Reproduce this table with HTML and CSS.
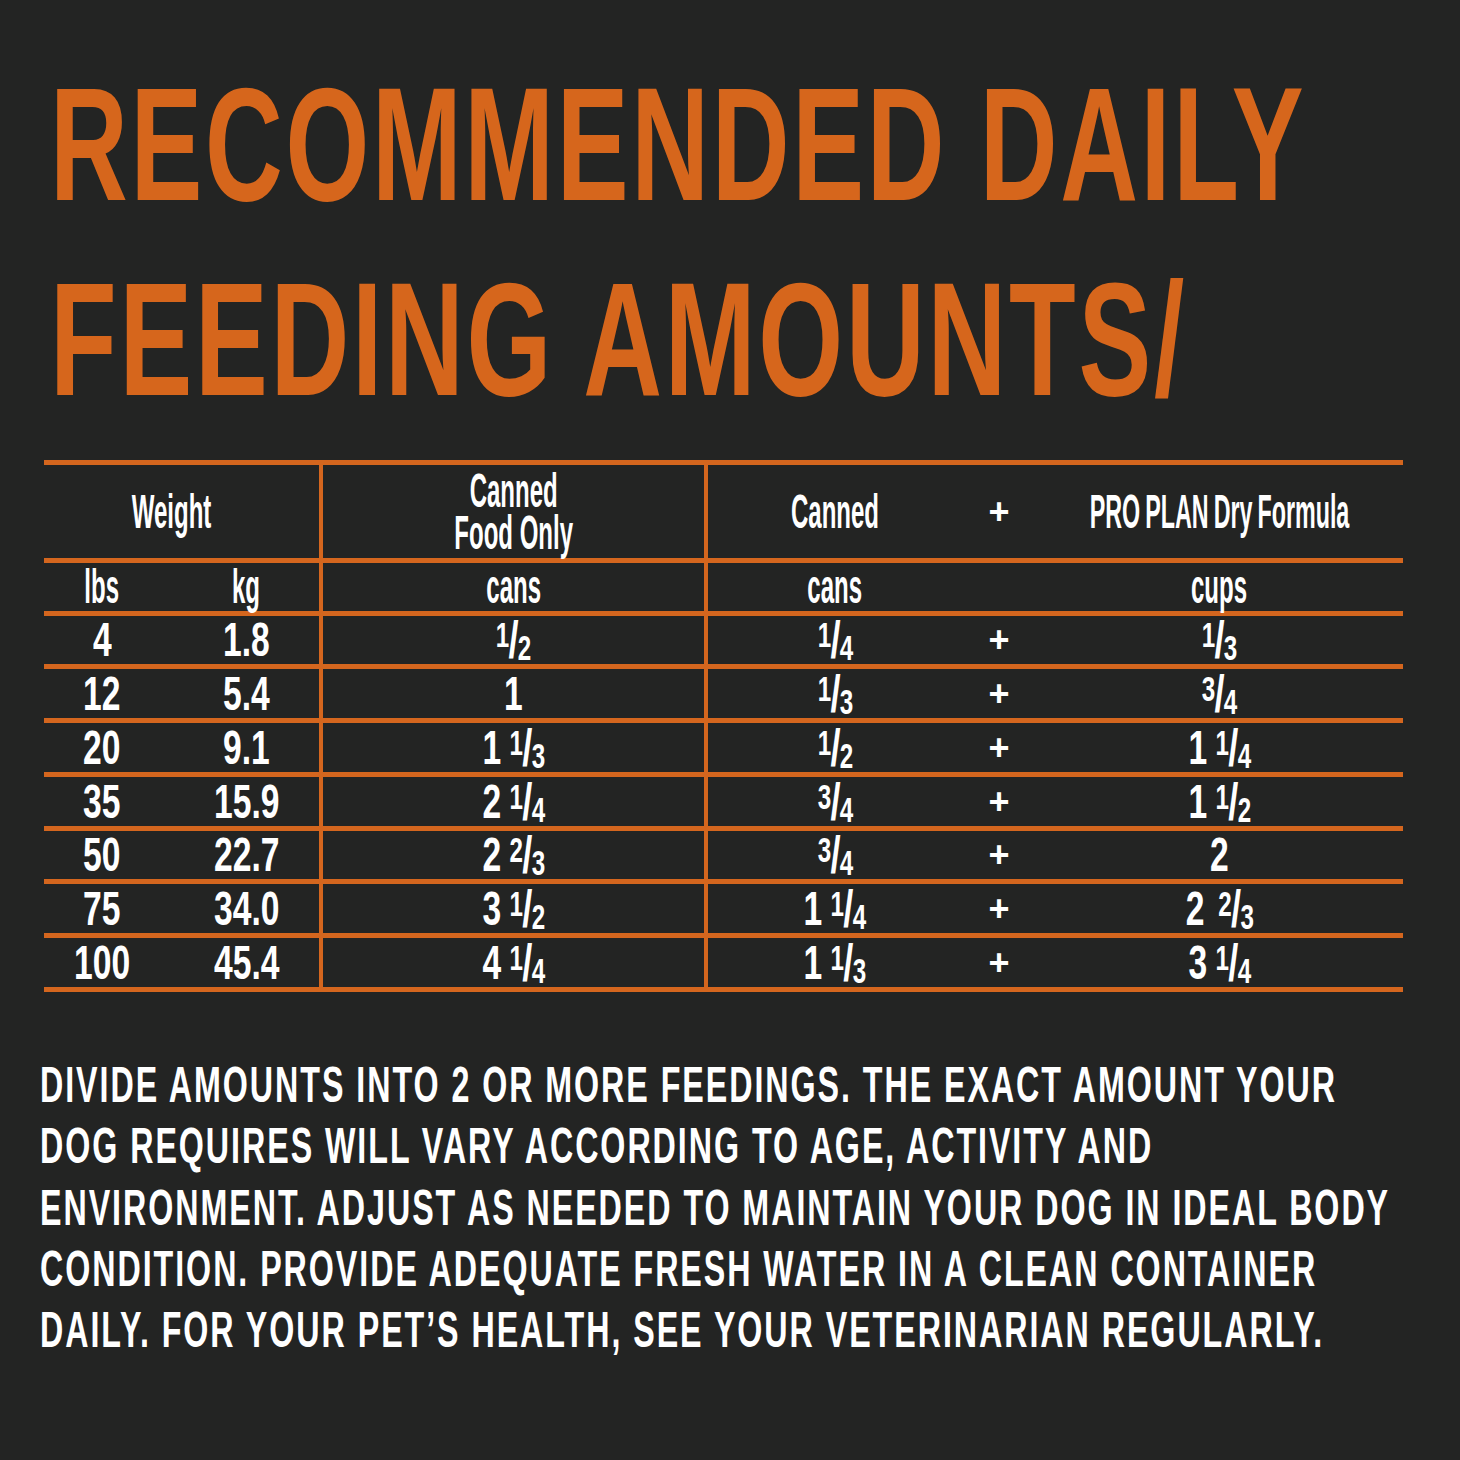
FILE: index.html
```html
<!DOCTYPE html>
<html lang="en">
<head>
<meta charset="utf-8">
<title>Recommended Daily Feeding Amounts</title>
<link rel="stylesheet" href="styles.css">
</head>
<body>
<div class="page">
  <h1 class="title">
    <span class="title-line l1">RECOMMENDED DAILY</span>
    <span class="title-line l2">FEEDING AMOUNTS/</span>
  </h1>

  <div class="chart">
    <div class="cell weight sep"><span class="t">Weight</span></div>
    <div class="cell sep"><span class="t two">Canned<br>Food Only</span></div>
    <div class="cell"><span class="t">Canned</span></div>
    <div class="cell"><span class="plus">+</span></div>
    <div class="cell"><span class="t tight">PRO PLAN Dry Formula</span></div>

    <div class="cell lbs"><span class="t">lbs</span></div>
    <div class="cell sep"><span class="t">kg</span></div>
    <div class="cell sep"><span class="t">cans</span></div>
    <div class="cell"><span class="t">cans</span></div>
    <div class="cell"></div>
    <div class="cell"><span class="t">cups</span></div>

    <div class="cell lbs"><span class="n">4</span></div>
    <div class="cell sep"><span class="n">1.8</span></div>
    <div class="cell sep"><span class="n"><span class="fr"><span class="nu">1</span><span class="sl">/</span><span class="de">2</span></span></span></div>
    <div class="cell"><span class="n"><span class="fr"><span class="nu">1</span><span class="sl">/</span><span class="de">4</span></span></span></div>
    <div class="cell"><span class="plus">+</span></div>
    <div class="cell"><span class="n"><span class="fr"><span class="nu">1</span><span class="sl">/</span><span class="de">3</span></span></span></div>

    <div class="cell lbs"><span class="n">12</span></div>
    <div class="cell sep"><span class="n">5.4</span></div>
    <div class="cell sep"><span class="n">1</span></div>
    <div class="cell"><span class="n"><span class="fr"><span class="nu">1</span><span class="sl">/</span><span class="de">3</span></span></span></div>
    <div class="cell"><span class="plus">+</span></div>
    <div class="cell"><span class="n"><span class="fr"><span class="nu">3</span><span class="sl">/</span><span class="de">4</span></span></span></div>

    <div class="cell lbs"><span class="n">20</span></div>
    <div class="cell sep"><span class="n">9.1</span></div>
    <div class="cell sep"><span class="n">1<span class="fr gap"><span class="nu">1</span><span class="sl">/</span><span class="de">3</span></span></span></div>
    <div class="cell"><span class="n"><span class="fr"><span class="nu">1</span><span class="sl">/</span><span class="de">2</span></span></span></div>
    <div class="cell"><span class="plus">+</span></div>
    <div class="cell"><span class="n">1<span class="fr gap"><span class="nu">1</span><span class="sl">/</span><span class="de">4</span></span></span></div>

    <div class="cell lbs"><span class="n">35</span></div>
    <div class="cell sep"><span class="n">15.9</span></div>
    <div class="cell sep"><span class="n">2<span class="fr gap"><span class="nu">1</span><span class="sl">/</span><span class="de">4</span></span></span></div>
    <div class="cell"><span class="n"><span class="fr"><span class="nu">3</span><span class="sl">/</span><span class="de">4</span></span></span></div>
    <div class="cell"><span class="plus">+</span></div>
    <div class="cell"><span class="n">1<span class="fr gap"><span class="nu">1</span><span class="sl">/</span><span class="de">2</span></span></span></div>

    <div class="cell lbs"><span class="n">50</span></div>
    <div class="cell sep"><span class="n">22.7</span></div>
    <div class="cell sep"><span class="n">2<span class="fr gap"><span class="nu">2</span><span class="sl">/</span><span class="de">3</span></span></span></div>
    <div class="cell"><span class="n"><span class="fr"><span class="nu">3</span><span class="sl">/</span><span class="de">4</span></span></span></div>
    <div class="cell"><span class="plus">+</span></div>
    <div class="cell"><span class="n">2</span></div>

    <div class="cell lbs"><span class="n">75</span></div>
    <div class="cell sep"><span class="n">34.0</span></div>
    <div class="cell sep"><span class="n">3<span class="fr gap"><span class="nu">1</span><span class="sl">/</span><span class="de">2</span></span></span></div>
    <div class="cell"><span class="n">1<span class="fr gap"><span class="nu">1</span><span class="sl">/</span><span class="de">4</span></span></span></div>
    <div class="cell"><span class="plus">+</span></div>
    <div class="cell"><span class="n">2<span class="fr wide"><span class="nu">2</span><span class="sl">/</span><span class="de">3</span></span></span></div>

    <div class="cell lbs"><span class="n">100</span></div>
    <div class="cell sep"><span class="n">45.4</span></div>
    <div class="cell sep"><span class="n">4<span class="fr gap"><span class="nu">1</span><span class="sl">/</span><span class="de">4</span></span></span></div>
    <div class="cell"><span class="n">1<span class="fr gap"><span class="nu">1</span><span class="sl">/</span><span class="de">3</span></span></span></div>
    <div class="cell"><span class="plus">+</span></div>
    <div class="cell"><span class="n">3<span class="fr gap"><span class="nu">1</span><span class="sl">/</span><span class="de">4</span></span></span></div>
  </div>

  <p class="note">DIVIDE AMOUNTS INTO 2 OR MORE FEEDINGS. THE EXACT AMOUNT YOUR<br>DOG REQUIRES WILL VARY ACCORDING TO AGE, ACTIVITY AND<br>ENVIRONMENT. ADJUST AS NEEDED TO MAINTAIN YOUR DOG IN IDEAL BODY<br>CONDITION. PROVIDE ADEQUATE FRESH WATER IN A CLEAN CONTAINER<br>DAILY. FOR YOUR PET’S HEALTH, SEE YOUR VETERINARIAN REGULARLY.</p>
</div>
</body>
</html>
```

FILE: styles.css
```css
html, body {
  margin: 0;
  padding: 0;
  background: #232423;
}

.page {
  width: 1460px;
  height: 1460px;
  box-sizing: border-box;
  padding-top: 47px;
  overflow: hidden;
  background: #232423;
  color: #ffffff;
  font-family: "Liberation Sans", Arial, sans-serif;
  font-weight: 700;
}

.title {
  margin: 0 0 0 50px;
  font-size: 161px;
  line-height: 195px;
  font-weight: 700;
  color: #d6661c;
  white-space: nowrap;
  letter-spacing: 4px;
}

.title-line {
  display: block;
  transform: scaleX(0.669);
  transform-origin: 0 50%;
}

.title-line.l2 {
  transform: scaleX(0.678);
}

.chart {
  margin: 23px 0 0 44px;
  width: 1359px;
  display: grid;
  grid-template-columns: 130px 149px 385px 254px 74px 367px;
  grid-template-rows: 98px 53px 53px 54px 54px 54px 53px 54px 54px;
  border-top: 5px solid #d4661e;
}

.cell {
  display: flex;
  align-items: center;
  justify-content: center;
  border-bottom: 5px solid #d4661e;
  font-size: 48px;
  line-height: 60px;
  white-space: nowrap;
}

.sep {
  border-right: 4px solid #d4661e;
}

.weight {
  grid-column: span 2;
  padding-right: 20px;
}

.lbs {
  padding-right: 14px;
}

.t {
  display: inline-block;
  transform: scaleX(0.5);
  white-space: nowrap;
}

.t.tight {
  word-spacing: -3px;
  transform: scaleX(0.485);
}

.two {
  line-height: 42px;
  text-align: center;
}

.n {
  display: inline-block;
  transform: scaleX(0.7);
  white-space: nowrap;
}

.plus {
  font-size: 36px;
}

.fr {
  display: inline;
}

.fr.gap {
  margin-left: 12px;
}

.fr.wide {
  margin-left: 20px;
}

.nu,
.de {
  font-size: 0.72em;
  line-height: 1;
}

.nu {
  vertical-align: 9.5px;
}

.de {
  vertical-align: -4px;
}

.sl {
  font-size: 1.08em;
  line-height: 1;
  vertical-align: -2px;
  margin: 0 -1px;
}

.note {
  margin: 63px 0 0 40px;
  font-size: 50px;
  line-height: 61.3px;
  font-weight: 700;
  letter-spacing: 3px;
  white-space: nowrap;
  transform: scaleX(0.645);
  transform-origin: 0 0;
}
```
